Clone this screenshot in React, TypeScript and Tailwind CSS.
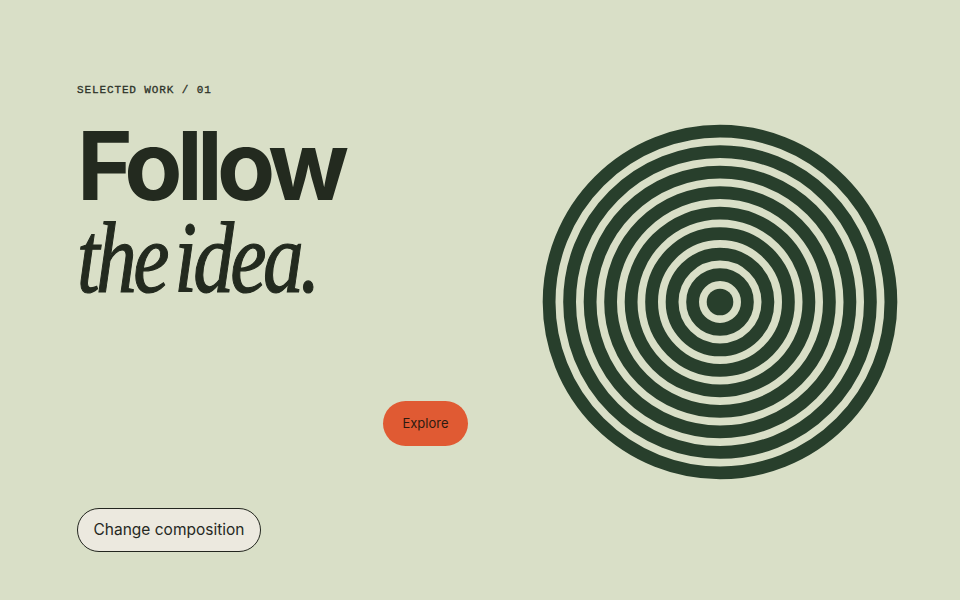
const RINGS = [1, 2, 3, 4, 5, 6, 7, 8];

function Target() {
  // outer edge of ring k sits at 13.3 + 20.5k, each band ~12.8 wide
  return (
    <svg width="356" height="356" viewBox="0 0 356 356" className="block">
      <circle cx="178" cy="178" r="13.3" fill="#283f2c" />
      {RINGS.map((k) => (
        <circle
          key={k}
          cx="178"
          cy="178"
          r={13.3 + 20.5 * k - 6.4}
          fill="none"
          stroke="#283f2c"
          strokeWidth="12.8"
        />
      ))}
    </svg>
  );
}

export default function App() {
  return (
    <div className="flex h-[600px] w-full overflow-hidden bg-[#d9dfc7] pl-[77px]">
      <div className="flex w-[391px] shrink-0 flex-col pt-[84px]">
        <p className="font-['Liberation_Mono',monospace] text-[11px] leading-[12px] tracking-[0.08em] text-[#2c3127] [-webkit-text-stroke:0.3px_#2c3127]">
          SELECTED WORK / 01
        </p>
        <h1 className="mt-[24px] text-[#232a1f]">
          <span className="block font-['Inter',sans-serif] text-[95px] font-bold leading-[92px] tracking-[-0.06em]">
            Follow
          </span>
          <span className="block origin-left scale-x-[0.8] whitespace-nowrap font-['Liberation_Serif',serif] text-[102px] italic leading-[92px] tracking-[-0.045em] [word-spacing:-0.1em] [-webkit-text-stroke:1.2px_#232a1f]">
            the idea.
          </span>
        </h1>
        <button
          type="button"
          className="mt-[97px] inline-flex h-[45px] w-[85px] items-center justify-center self-end rounded-full bg-[#e05a33] font-['Inter',sans-serif] text-[13px] text-[#2e1a10]"
        >
          Explore
        </button>
        <button
          type="button"
          className="mt-[62px] inline-flex h-[44px] w-[184px] items-center justify-center self-start rounded-full border border-[#23261f] bg-[#ece9df] font-['Inter',sans-serif] text-[15.5px] text-[#262822]"
        >
          Change composition
        </button>
      </div>
      <div className="ml-[74px] mt-[124px] shrink-0 self-start">
        <Target />
      </div>
    </div>
  );
}
